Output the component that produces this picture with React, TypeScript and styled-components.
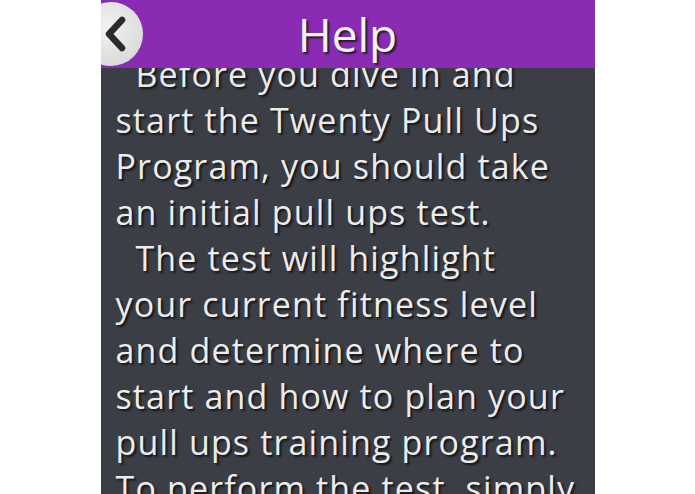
import React, { FC } from 'react';
import styled, { createGlobalStyle } from 'styled-components';

const GlobalStyle = createGlobalStyle`
  html, body {
    margin: 0;
    padding: 0;
    background: #ffffff;
    height: 100%;
  }
  #root {
    height: 100%;
  }
`;

const helpText = `  Before you dive in and
start the Twenty Pull Ups
Program, you should take
an initial pull ups test.
  The test will highlight
your current fitness level
and determine where to
start and how to plan your
pull ups training program.
To perform the test, simply
hang from the bar with your
palms facing away from you.`;

const App: FC = () => {
  return (
    <>
      <GlobalStyle />
      <PageStyled>
        <ScreenStyled>
          <HeaderStyled>
            <BackButtonStyled aria-label="Back">
              <svg width="24" height="36" viewBox="0 0 24 36">
                <path
                  d="M19 4 L6 18 L19 32"
                  fill="none"
                  stroke="#2b2b2b"
                  strokeWidth="6.5"
                  strokeLinecap="round"
                  strokeLinejoin="round"
                />
              </svg>
            </BackButtonStyled>
            <TitleStyled>Help</TitleStyled>
          </HeaderStyled>
          <ContentStyled>
            <HelpTextStyled>{helpText}</HelpTextStyled>
          </ContentStyled>
        </ScreenStyled>
      </PageStyled>
    </>
  );
};

export default App;

const PageStyled = styled.div`
  width: 100%;
  height: 100vh;
  display: flex;
  justify-content: center;
  font-family: 'Open Sans', 'DejaVu Sans', sans-serif;
`;

const ScreenStyled = styled.div`
  width: 494px;
  height: 100%;
  display: flex;
  flex-direction: column;
  background: #3b3e45;
  overflow: hidden;
`;

const HeaderStyled = styled.div`
  position: relative;
  height: 68px;
  flex-shrink: 0;
  background: #8a2bb4;
  display: flex;
  align-items: center;
  justify-content: center;
  z-index: 1;
`;

const BackButtonStyled = styled.button`
  position: absolute;
  left: -22px;
  top: 2px;
  width: 64px;
  height: 64px;
  border-radius: 50%;
  border: none;
  padding: 0 0 0 8px;
  background: radial-gradient(circle at 45% 40%, #f2f2f2 0%, #dcdcdc 70%, #c8c8c8 100%);
  display: flex;
  align-items: center;
  justify-content: center;
`;

const TitleStyled = styled.h1`
  margin: 0;
  font-size: 46px;
  font-weight: 400;
  color: #f2f2f2;
  text-shadow: 2px 2px 2px #1e1e24;
  line-height: 1;
`;

const ContentStyled = styled.div`
  flex: 1;
  overflow: hidden;
  padding: 0 6px 0 15px;
`;

const HelpTextStyled = styled.p`
  margin: -17px 0 0 0;
  white-space: pre-wrap;
  font-size: 34px;
  line-height: 46px;
  letter-spacing: 1.15px;
  color: #ececec;
  text-shadow: 2px 2px 2px #15161a;
`;
